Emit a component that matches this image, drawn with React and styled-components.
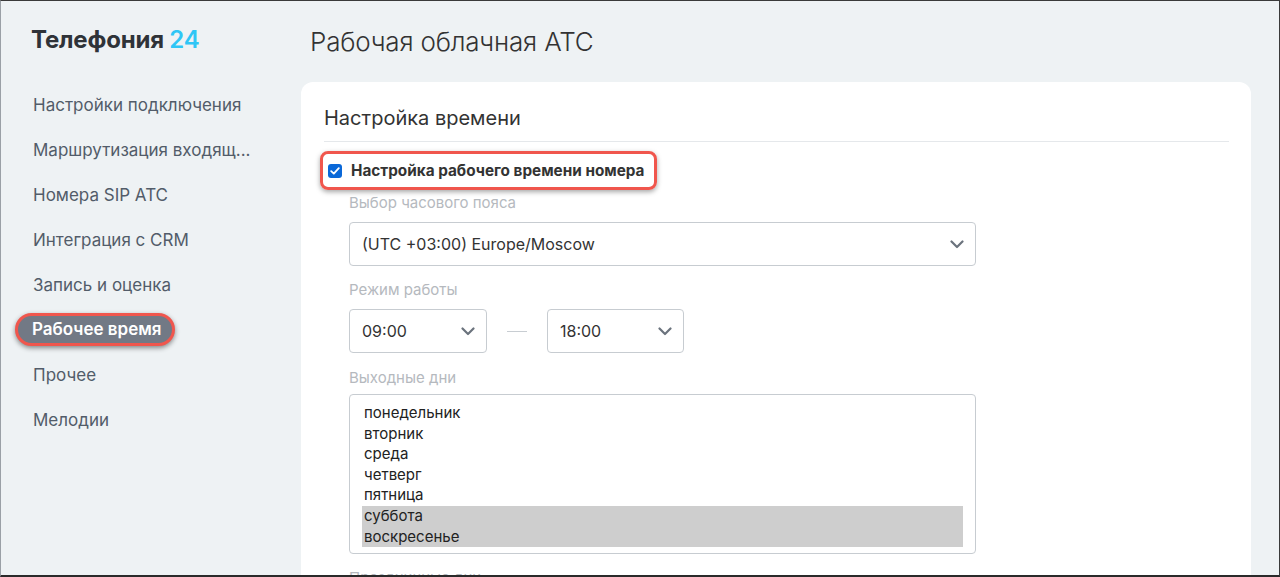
import React from "react";
import styled, { createGlobalStyle } from "styled-components";

const Global = createGlobalStyle`
  html, body { margin: 0; padding: 0; background: #eef2f4; }
  body { font-family: Inter, "Noto Sans", sans-serif; }
  * { box-sizing: border-box; }
`;

const Frame = styled.div`
  width: 1280px;
  height: 577px;
  overflow: hidden;
  display: flex;
  background: #eef2f4;
  border-top: 1px solid #3a3a3a;
  border-left: 1px solid #9aa0a6;
  border-bottom: 2px solid #2a2a2a;
  border-right: 1px solid #3a3a3a;
`;

const Sidebar = styled.aside`
  width: 300px;
  flex: none;
  display: flex;
  flex-direction: column;
  padding-top: 24px;
`;

const Logo = styled.div`
  padding-left: 30px;
  font-size: 24px;
  font-weight: 700;
  color: #2f3338;
  letter-spacing: -0.2px;
  line-height: 30px;
  height: 57px;
  span { color: #2fc6f6; font-weight: 600; }
`;

const Nav = styled.nav`
  display: flex;
  flex-direction: column;
`;

const NavItem = styled.div`
  height: 45px;
  display: flex;
  align-items: center;
  padding-left: 32px;
  font-size: 17px;
  color: #525c69;
  white-space: nowrap;
`;

const ActivePill = styled.span`
  margin-left: -18px;
  padding: 3px 10px 4px 14px;
  border: 3px solid #f0564d;
  border-radius: 18px;
  background: #727985;
  color: #fff;
  font-weight: 600;
  box-shadow: 0 2px 5px rgba(0, 0, 0, 0.45);
`;

const Main = styled.main`
  flex: 1;
  display: flex;
  flex-direction: column;
  padding-right: 22px;
  min-height: 0;
`;

const PageTitle = styled.h1`
  flex: none;
  margin: 0;
  height: 81px;
  padding-top: 25px;
  padding-left: 9px;
  font-size: 26px;
  font-weight: 300;
  color: #333;
  line-height: 32px;
  letter-spacing: -0.2px;
`;

const Card = styled.section`
  flex: none;
  background: #fff;
  border-radius: 12px 12px 0 0;
  padding: 0 22px 40px 23px;
  margin-right: 6px;
`;

const CardTitle = styled.h2`
  margin: 0;
  padding-top: 23px;
  height: 60px;
  border-bottom: 1px solid #e5e8eb;
  font-size: 20px;
  font-weight: 400;
  color: #333;
  line-height: 26px;
`;

const CheckRow = styled.label`
  display: inline-flex;
  align-items: center;
  gap: 9px;
  margin: 9px 0 0 -4px;
  height: 39px;
  padding: 0 9px 0 5px;
  border: 3px solid #f0564d;
  border-radius: 8px;
  box-shadow: 0 2px 5px rgba(0, 0, 0, 0.35);
  font-size: 15.3px;
  font-weight: 700;
  color: #333;
`;

const Check = styled.span`
  width: 14px;
  height: 14px;
  border-radius: 3px;
  background: #0a68d8;
  display: flex;
  align-items: center;
  justify-content: center;
`;

const Form = styled.div`
  padding-left: 25px;
  display: flex;
  flex-direction: column;
`;

const FieldLabel = styled.div`
  font-size: 15px;
  color: #b5b9be;
  line-height: 20px;
  margin-top: ${(p) => p.$top}px;
  margin-bottom: ${(p) => p.$bottom ?? 9}px;
`;

const Select = styled.div`
  width: ${(p) => p.$w}px;
  height: 44px;
  border: 1px solid #c7ccd1;
  border-radius: 4px;
  display: flex;
  align-items: center;
  justify-content: space-between;
  padding: 0 11px 0 12px;
  font-size: 16px;
  color: #333;
`;

const TimeRow = styled.div`
  display: flex;
  align-items: center;
  gap: 20px;
`;

const Dash = styled.span`
  width: 20px;
  height: 1px;
  background: #c8cdd2;
`;

const ListBox = styled.div`
  width: 627px;
  height: 160px;
  border: 1px solid #c7ccd1;
  border-radius: 4px;
  padding: 8px 12px 0 12px;
  display: flex;
  flex-direction: column;
`;

const Option = styled.div`
  height: 20.6px;
  line-height: 20.6px;
  font-size: 15px;
  color: #222;
  padding-left: 2px;
  background: ${(p) => (p.$selected ? "#cecece" : "transparent")};
`;

const Chevron = () => (
  <svg width="14" height="9" viewBox="0 0 14 9" fill="none">
    <path d="M1.5 1.5L7 7l5.5-5.5" stroke="#6b737d" strokeWidth="2.2" strokeLinecap="round" strokeLinejoin="round" />
  </svg>
);

const navItems = [
  "Настройки подключения",
  "Маршрутизация входящ...",
  "Номера SIP АТС",
  "Интеграция с CRM",
  "Запись и оценка",
  "Рабочее время",
  "Прочее",
  "Мелодии",
];

const days = ["понедельник", "вторник", "среда", "четверг", "пятница", "суббота", "воскресенье"];

export default function App() {
  return (
    <>
      <Global />
      <Frame>
        <Sidebar>
          <Logo>
            Телефония <span>24</span>
          </Logo>
          <Nav>
            {navItems.map((n) => (
              <NavItem key={n}>
                {n === "Рабочее время" ? <ActivePill>{n}</ActivePill> : n}
              </NavItem>
            ))}
          </Nav>
        </Sidebar>
        <Main>
          <PageTitle>Рабочая облачная АТС</PageTitle>
          <Card>
            <CardTitle>Настройка времени</CardTitle>
            <CheckRow>
              <Check>
                <svg width="10" height="8" viewBox="0 0 10 8" fill="none">
                  <path d="M1.2 4.2L3.8 6.6 8.8 1.2" stroke="#fff" strokeWidth="1.8" strokeLinecap="round" strokeLinejoin="round" />
                </svg>
              </Check>
              Настройка рабочего времени номера
            </CheckRow>
            <Form>
              <FieldLabel $top={3}>Выбор часового пояса</FieldLabel>
              <Select $w={627}>
                (UTC +03:00) Europe/Moscow
                <Chevron />
              </Select>
              <FieldLabel $top={14}>Режим работы</FieldLabel>
              <TimeRow>
                <Select $w={138}>
                  09:00
                  <Chevron />
                </Select>
                <Dash />
                <Select $w={137}>
                  18:00
                  <Chevron />
                </Select>
              </TimeRow>
              <FieldLabel $top={15} $bottom={6}>Выходные дни</FieldLabel>
              <ListBox>
                {days.map((d, i) => (
                  <Option key={d} $selected={i >= 5}>
                    {d}
                  </Option>
                ))}
              </ListBox>
              <FieldLabel $top={14}>Праздничные дни</FieldLabel>
            </Form>
          </Card>
        </Main>
      </Frame>
    </>
  );
}
